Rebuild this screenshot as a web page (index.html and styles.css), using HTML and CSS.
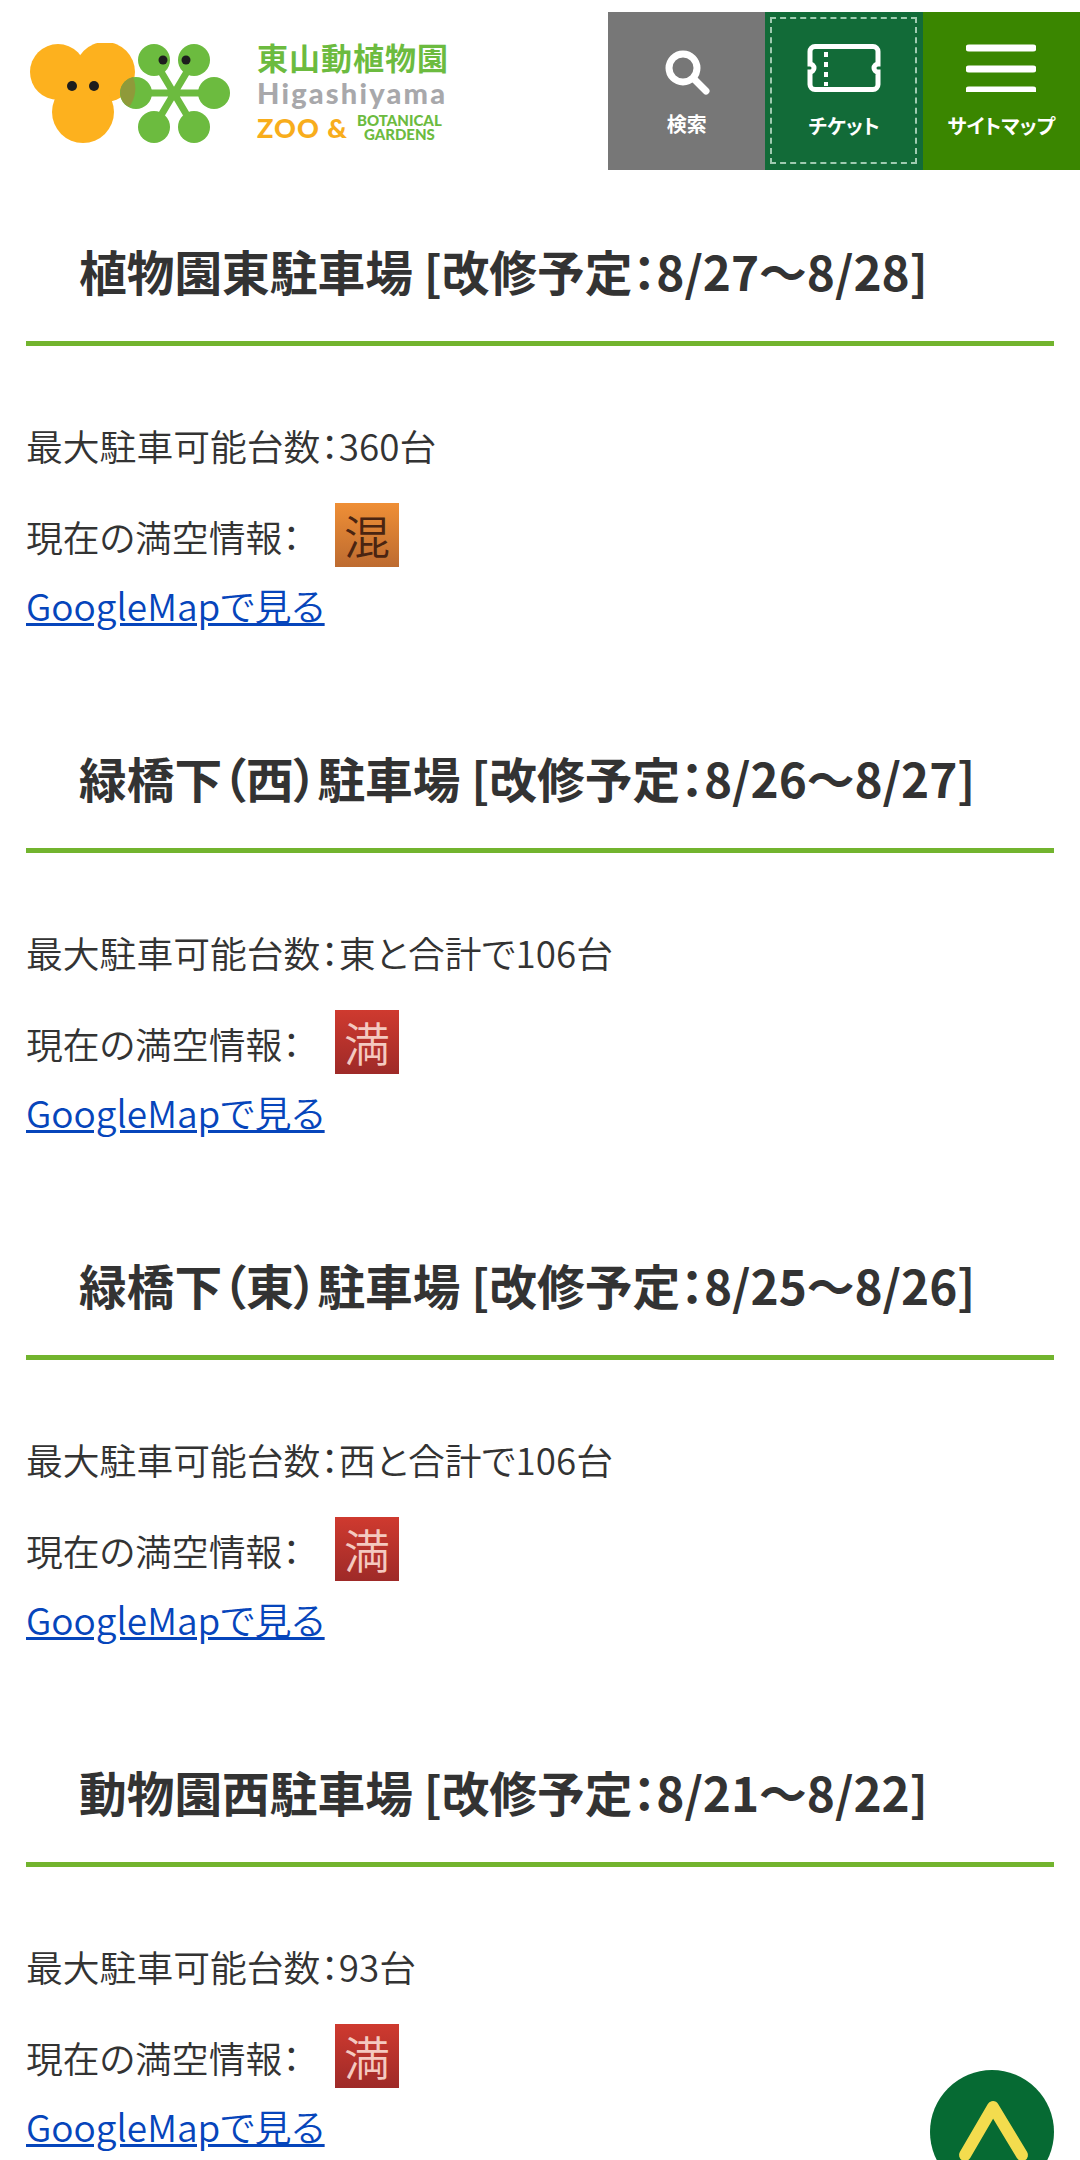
FILE: index.html
```html
<!DOCTYPE html>
<html lang="ja">
<head>
    <meta charset="UTF-8">
    <meta name="viewport" content="width=device-width, initial-scale=1.0">
    <title>駐車場情報</title>
    <link rel="stylesheet" href="styles.css">
</head>
<body>

<header class="site-header">
    <a class="logo" href="#">
        <svg class="logo-mark" viewBox="30 43 200 101" width="200" height="101">
            <g fill="#fdb11e">
                <circle cx="58" cy="72" r="28"/>
                <circle cx="105" cy="72" r="30"/>
                <circle cx="83" cy="112" r="31"/>
                <rect x="56" y="62" width="50" height="45"/>
            </g>
            <g stroke="#6cbb3f" stroke-width="7" fill="none">
                <path d="M136 93H214M154 60L194 127M194 60L154 127"/>
            </g>
            <g fill="#6cbb3f">
                <circle cx="154" cy="60" r="16"/>
                <circle cx="194" cy="60" r="16"/>
                <circle cx="136" cy="93" r="16"/>
                <circle cx="214" cy="93" r="16"/>
                <circle cx="154" cy="127" r="16"/>
                <circle cx="194" cy="127" r="16"/>
            </g>
            <path d="M133 77A16 16 0 0 0 129 107A30 30 0 0 0 133 77Z" fill="#8f9a3a"/>
            <g fill="#1d1d1d">
                <circle cx="72" cy="86" r="5"/>
                <circle cx="94" cy="86" r="5"/>
                <circle cx="163" cy="60" r="4.5"/>
                <circle cx="186" cy="60" r="4.5"/>
            </g>
        </svg>
        <div class="logo-text">
            <div class="logo-ja">東山動植物園</div>
            <div class="logo-en">Higashiyama</div>
            <div class="logo-sub">
                <span class="logo-zoo">ZOO &amp;</span>
                <span class="logo-bot">BOTANICAL<br>GARDENS</span>
            </div>
        </div>
    </a>
    <nav class="head-nav">
        <a class="nav-btn nav-search" href="#">
            <svg viewBox="0 0 48 48" width="48" height="48">
                <circle cx="20" cy="20" r="14" fill="none" stroke="#fff" stroke-width="7"/>
                <path d="M32 32L43 43" stroke="#fff" stroke-width="7" stroke-linecap="round"/>
            </svg>
            <span>検索</span>
        </a>
        <a class="nav-btn nav-ticket" href="#">
            <svg viewBox="0 0 76 48" width="76" height="48">
                <path d="M9 2.5H67A5 5 0 0 1 72 7.5V20A4 4 0 0 0 72 28V40.5A5 5 0 0 1 67 45.5H9A5 5 0 0 1 4 40.5V28A4 4 0 0 0 4 20V7.5A5 5 0 0 1 9 2.5Z" fill="none" stroke="#fff" stroke-width="5"/>
                <path d="M20 8V42" stroke="#fff" stroke-width="4" stroke-dasharray="5 5"/>
            </svg>
            <span>チケット</span>
        </a>
        <a class="nav-btn nav-map" href="#">
            <svg viewBox="0 0 70 48" width="70" height="48">
                <path d="M3 4H67M3 25H67M3 46H67" stroke="#fff" stroke-width="7" stroke-linecap="round"/>
            </svg>
            <span>サイトマップ</span>
        </a>
    </nav>
</header>

<main class="parking-list">
    <section class="parking">
        <h2>植物園東駐車場 [改修予定&#xFF1A;8/27〜8/28]</h2>
        <p class="capacity">最大駐車可能台数&#xFF1A;360台</p>
        <p class="status"><span class="status-label">現在の満空情報&#xFF1A;</span><span class="badge badge-busy">混</span></p>
        <a class="map-link" href="#">GoogleMapで見る</a>
    </section>
    <section class="parking">
        <h2>緑橋下&#xFF08;西&#xFF09;駐車場 [改修予定&#xFF1A;8/26〜8/27]</h2>
        <p class="capacity">最大駐車可能台数&#xFF1A;東と合計で106台</p>
        <p class="status"><span class="status-label">現在の満空情報&#xFF1A;</span><span class="badge badge-full">満</span></p>
        <a class="map-link" href="#">GoogleMapで見る</a>
    </section>
    <section class="parking">
        <h2>緑橋下&#xFF08;東&#xFF09;駐車場 [改修予定&#xFF1A;8/25〜8/26]</h2>
        <p class="capacity">最大駐車可能台数&#xFF1A;西と合計で106台</p>
        <p class="status"><span class="status-label">現在の満空情報&#xFF1A;</span><span class="badge badge-full">満</span></p>
        <a class="map-link" href="#">GoogleMapで見る</a>
    </section>
    <section class="parking">
        <h2>動物園西駐車場 [改修予定&#xFF1A;8/21〜8/22]</h2>
        <p class="capacity">最大駐車可能台数&#xFF1A;93台</p>
        <p class="status"><span class="status-label">現在の満空情報&#xFF1A;</span><span class="badge badge-full">満</span></p>
        <a class="map-link" href="#">GoogleMapで見る</a>
    </section>
</main>

<a class="page-top" href="#">
    <svg viewBox="0 0 124 124" width="124" height="124">
        <path d="M35 85L63 37L92 85" fill="none" stroke="#f3dc4e" stroke-width="12" stroke-linecap="round" stroke-linejoin="round"/>
    </svg>
</a>

</body>
</html>
```

FILE: styles.css
```css
html, body {
    height: 2160px;
    overflow: hidden;
}
body {
    font-family: "Noto Sans CJK JP", "Noto Sans", sans-serif;
    font-feature-settings: "palt";
    color: #333;
    background-color: #fff;
    margin: 0;
    padding: 0;
}
.site-header {
    display: flex;
    justify-content: space-between;
    padding-top: 12px;
    height: 158px;
}
.logo {
    display: flex;
    align-items: flex-start;
    padding: 31px 0 0 30px;
    text-decoration: none;
}
.logo-mark {
    flex-shrink: 0;
}
.logo-text {
    margin-left: 27px;
    margin-top: -2px;
    width: 192px;
    line-height: 1;
}
.logo-ja {
    color: #6cbb3f;
    font-size: 31px;
    font-weight: 700;
    letter-spacing: 1px;
    white-space: nowrap;
}
.logo-en {
    color: #a8a8ab;
    font-family: "Lato", sans-serif;
    font-size: 29px;
    font-weight: 900;
    letter-spacing: 2.2px;
    margin-top: 6px;
}
.logo-sub {
    display: flex;
    align-items: center;
    margin-top: 6px;
    white-space: nowrap;
}
.logo-zoo {
    width: 100px;
    color: #f8ad1c;
    font-family: "Lato", sans-serif;
    font-size: 27px;
    font-weight: 900;
    letter-spacing: 1px;
}
.logo-bot {
    color: #6cbb3f;
    font-family: "Lato", sans-serif;
    font-size: 15px;
    font-weight: 900;
    line-height: 14px;
    text-align: center;
}
.head-nav {
    display: flex;
    width: 472px;
    height: 158px;
}
.nav-btn {
    flex: 1;
    display: flex;
    flex-direction: column;
    align-items: center;
    color: #fff;
    font-size: 20px;
    font-weight: 700;
    text-decoration: none;
    box-sizing: border-box;
    white-space: nowrap;
}
.nav-btn svg {
    margin-top: 32px;
}
.nav-btn span {
    margin-top: 19px;
    line-height: 30px;
}
.nav-search {
    background-color: #777;
}
.nav-search svg {
    margin-top: 36px;
}
.nav-search span {
    margin-top: 13px;
}
.nav-ticket {
    background-color: #126b38;
    position: relative;
}
.nav-ticket::after {
    content: "";
    position: absolute;
    inset: 5px 6px 6px 5px;
    border: 2px dashed #9fcbb0;
}
.nav-map {
    background-color: #3a8600;
}
.parking-list {
    padding: 0 26px;
}
.parking {
    height: 507px;
}
.parking h2 {
    font-size: 47.7px;
    font-weight: 700;
    line-height: 68px;
    margin: 0;
    padding: 67px 0 0 53px;
    height: 104px;
    white-space: nowrap;
    border-bottom: 5px solid #72b42e;
}
.capacity {
    font-size: 36.8px;
    font-weight: 350;
    line-height: 52px;
    margin: 73px 0 0;
}
.status {
    display: flex;
    align-items: center;
    font-size: 36.8px;
    font-weight: 350;
    line-height: 52px;
    margin: 39px 0 0;
}
.status-label {
    width: 309px;
    margin-top: -5px;
}
.badge {
    width: 64px;
    height: 64px;
    margin-top: -7px;
    font-size: 46px;
    line-height: 62px;
    text-align: center;
    font-weight: 350;
}
.badge-busy {
    color: #4a2411;
    background: linear-gradient(#ef8f36, #bd6b30);
}
.badge-full {
    color: #f4c9c0;
    background: linear-gradient(#cf3a2f, #9e2a28);
}
.map-link {
    display: inline-block;
    font-size: 37px;
    font-weight: 350;
    line-height: 52px;
    margin-top: 12px;
    color: #0645bb;
}
.page-top {
    position: fixed;
    left: 930px;
    top: 2070px;
    width: 124px;
    height: 124px;
    border-radius: 50%;
    background-color: #066a33;
}
```
